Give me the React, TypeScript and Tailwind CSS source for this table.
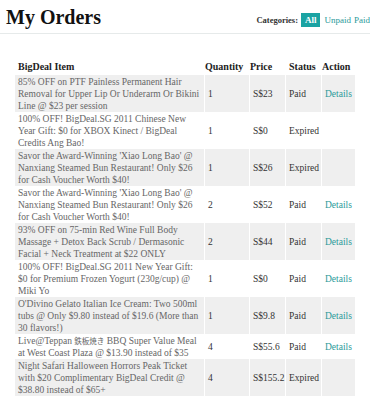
import React from "react";

type Row = { item: React.ReactNode; qty: string; price: string; status: string; details: boolean };

const rows: Row[] = [
  { item: "85% OFF on PTF Painless Permanent Hair Removal for Upper Lip Or Underarm Or Bikini Line @ $23 per session", qty: "1", price: "S$23", status: "Paid", details: true },
  { item: "100% OFF! BigDeal.SG 2011 Chinese New Year Gift: $0 for XBOX Kinect / BigDeal Credits Ang Bao!", qty: "1", price: "S$0", status: "Expired", details: false },
  { item: "Savor the Award-Winning 'Xiao Long Bao' @ Nanxiang Steamed Bun Restaurant! Only $26 for Cash Voucher Worth $40!", qty: "1", price: "S$26", status: "Expired", details: false },
  { item: "Savor the Award-Winning 'Xiao Long Bao' @ Nanxiang Steamed Bun Restaurant! Only $26 for Cash Voucher Worth $40!", qty: "2", price: "S$52", status: "Paid", details: true },
  { item: "93% OFF on 75-min Red Wine Full Body Massage + Detox Back Scrub / Dermasonic Facial + Neck Treatment at $22 ONLY", qty: "2", price: "S$44", status: "Paid", details: true },
  { item: "100% OFF! BigDeal.SG 2011 New Year Gift: $0 for Premium Frozen Yogurt (230g/cup) @ Miki Yo", qty: "1", price: "S$0", status: "Paid", details: true },
  { item: "O'Divino Gelato Italian Ice Cream: Two 500ml tubs @ Only $9.80 instead of $19.6 (More than 30 flavors!)", qty: "1", price: "S$9.8", status: "Paid", details: true },
  {
    item: (
      <>
        Live@Teppan <span className="text-[7.5px] leading-[8px]" style={{ fontFamily: '"Noto Sans CJK JP", sans-serif' }}>鉄板焼き</span> BBQ Super Value Meal at West Coast Plaza @ $13.90 instead of $35
      </>
    ),
    qty: "4", price: "S$55.6", status: "Paid", details: true,
  },
  { item: "Night Safari Halloween Horrors Peak Ticket with $20 Complimentary BigDeal Credit @ $38.80 instead of $65+", qty: "4", price: "S$155.2", status: "Expired", details: false },
];

const font = { fontFamily: '"Liberation Serif", Georgia, "Noto Sans CJK JP", serif' };

export default function App() {
  return (
    <div className="w-[370px] h-[400px] bg-white overflow-hidden" style={font}>
      <div className="flex items-end justify-between pl-[6px] pr-0 pt-[6px] pb-[4px] border-b border-[#e6eaea]">
        <h1 className="text-[20px] leading-[23px] font-bold text-[#111]">My Orders</h1>
        <div className="flex items-center text-[8.5px] leading-[10px] mb-[2px] whitespace-nowrap">
          <span className="text-[#333] font-bold mr-[3px]">Categories:</span>
          <span className="bg-[#1aa3a3] text-white font-bold text-[9px] px-[4px] py-[2px] mr-[4px]">All</span>
          <span className="text-[#2a9a9a] text-[9px] mr-[3px]">Unpaid</span>
          <span className="text-[#2a9a9a] text-[9px]">Paid</span>
        </div>
      </div>
      <div className="pl-[15px] pt-[27px]">
        <table className="border-separate border-spacing-x-[1px] border-spacing-y-0 -ml-[1px] text-[9.5px] leading-[12px] table-fixed w-[336px]">
          <colgroup>
            <col className="w-[189px]" />
            <col className="w-[44px]" />
            <col className="w-[35px]" />
            <col className="w-[35px]" />
            <col className="w-[33px]" />
          </colgroup>
          <thead>
            <tr className="text-[#222] font-bold text-left text-[10px]">
              <th className="px-[3px] pb-[2px] font-bold">BigDeal Item</th>
              <th className="px-0 pb-[2px] font-bold whitespace-nowrap">Quantity</th>
              <th className="px-0 pb-[2px] font-bold">Price</th>
              <th className="px-[3px] pb-[2px] font-bold">Status</th>
              <th className="px-0 pb-[2px] font-bold">Action</th>
            </tr>
          </thead>
          <tbody>
            {rows.map((r, i) => {
              const bg = i % 2 === 0 ? "bg-[#efefef]" : "bg-white";
              return (
                <tr key={i} className="align-middle">
                  <td className={`${bg} pl-[3px] pr-[1px] py-[0.5px] text-[#666]`}>{r.item}</td>
                  <td className={`${bg} px-[3px] text-[#333]`}>{r.qty}</td>
                  <td className={`${bg} px-[3px] text-[#333] whitespace-nowrap`}>{r.price}</td>
                  <td className={`${bg} px-[3px] text-[#333]`}>{r.status}</td>
                  <td className={`${bg} px-[3px] text-[#2a9a9a]`}>{r.details ? "Details" : ""}</td>
                </tr>
              );
            })}
          </tbody>
        </table>
      </div>
    </div>
  );
}
